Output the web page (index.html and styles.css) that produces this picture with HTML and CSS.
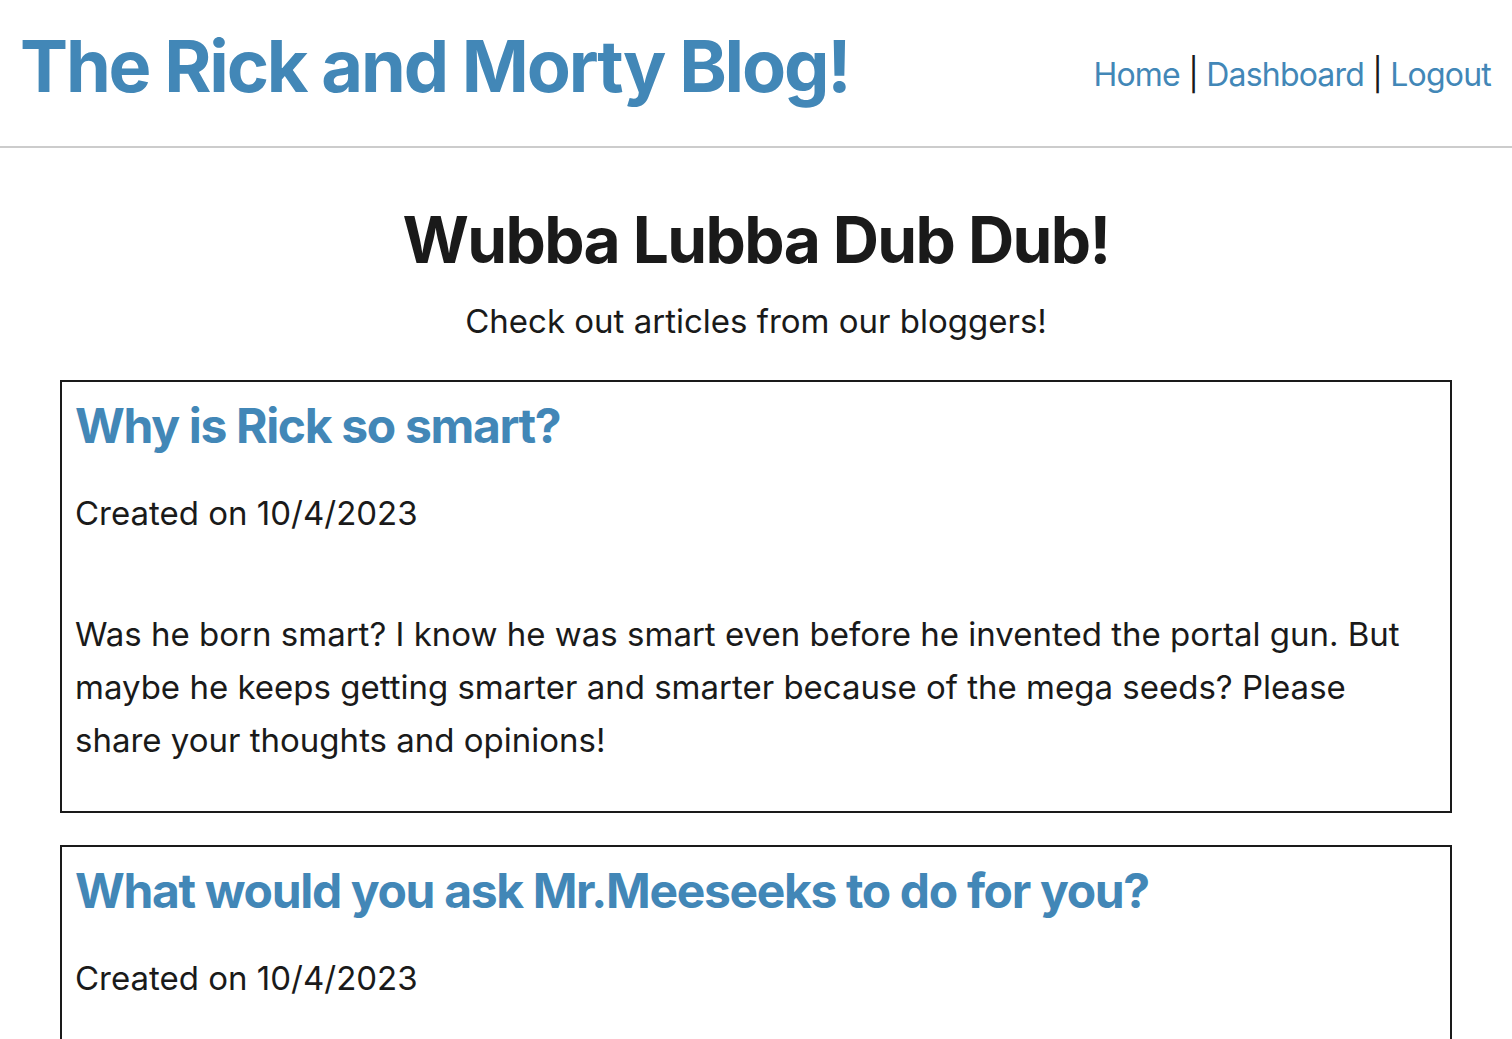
FILE: index.html
```html
<!DOCTYPE html>
<html lang="en">
<head>
<meta charset="utf-8">
<title>The Rick and Morty Blog!</title>
<link rel="stylesheet" href="styles.css">
</head>
<body>
<header class="site-header">
  <h1 class="site-title">The Rick and Morty Blog!</h1>
  <nav class="site-nav">
    <a href="#">Home</a> | <a href="#">Dashboard</a> | <a href="#">Logout</a>
  </nav>
</header>
<main class="content">
  <section class="intro">
    <h2 class="intro-title">Wubba Lubba Dub Dub!</h2>
    <p class="intro-text">Check out articles from our bloggers!</p>
  </section>
  <article class="post">
    <h3 class="post-title"><a href="#">Why is Rick so smart?</a></h3>
    <p class="post-date">Created on 10/4/2023</p>
    <p class="post-body">Was he born smart? I know he was smart even before he invented the portal gun. But maybe he keeps getting smarter and smarter because of the mega seeds? Please share your thoughts and opinions!</p>
  </article>
  <article class="post">
    <h3 class="post-title"><a href="#">What would you ask Mr.Meeseeks to do for you?</a></h3>
    <p class="post-date">Created on 10/4/2023</p>
    <p class="post-body">If you could have a Mr. Meeseeks help you with one task, what would you ask him to do? Let us know in the comments below!</p>
  </article>
</main>
</body>
</html>
```
FILE: styles.css
```css
html, body {
  margin: 0;
  padding: 0;
  background: #ffffff;
}
body {
  font-family: Inter, "Noto Sans", sans-serif;
  color: #1a1a1a;
}
a {
  color: #4287b7;
  text-decoration: none;
}
.site-header {
  display: flex;
  justify-content: space-between;
  align-items: flex-start;
  padding: 22px 21px 37px 20px;
  border-bottom: 2px solid #cccccc;
}
.site-title {
  margin: 0;
  font-size: 72px;
  font-weight: 700;
  letter-spacing: -0.03em;
  color: #4287b7;
  line-height: normal;
}
.site-nav {
  font-size: 32px;
  letter-spacing: -0.025em;
  padding-top: 33px;
  color: #1a1a1a;
}
.content {
  padding: 0 60px;
}
.intro {
  text-align: center;
  padding-top: 53px;
}
.intro-title {
  margin: 0;
  font-size: 64px;
  font-weight: 700;
  letter-spacing: -0.025em;
}
.intro-text {
  margin: 23px 0 39px;
  font-size: 33px;
}
.post {
  border: 2px solid #1a1a1a;
  padding: 14px 13px 12px;
  margin-bottom: 32px;
}
.post-title {
  margin: 0;
  font-size: 48px;
  font-weight: 700;
  letter-spacing: -0.028em;
}
.post-date {
  margin: 32px 0 0;
  font-size: 33px;
  line-height: 53px;
}
.post-body {
  margin: 68px 0 32px;
  font-size: 33px;
  line-height: 53px;
}
```
